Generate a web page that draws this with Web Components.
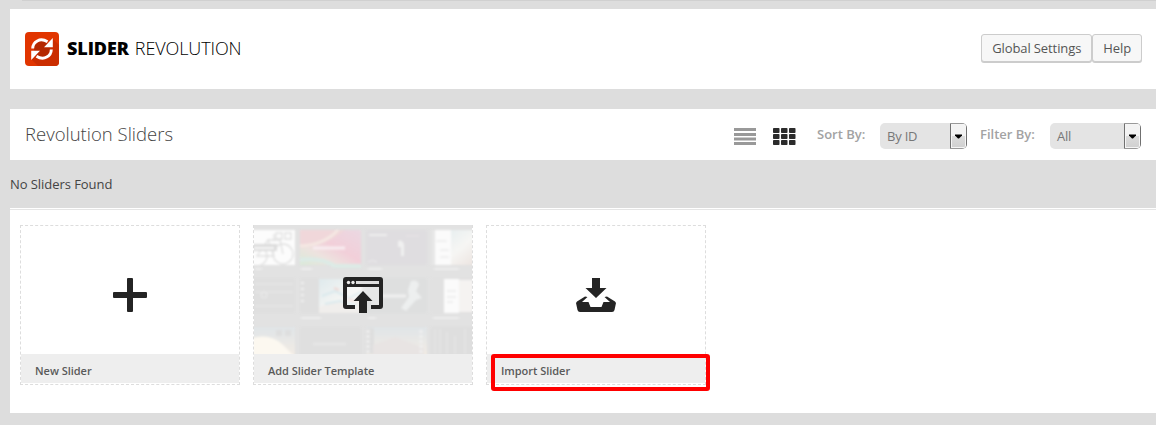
<!DOCTYPE html>
<html lang="en">
<head>
<meta charset="utf-8">
<title>Slider Revolution</title>
<style>
html,body{margin:0;height:425px;overflow:hidden;background:#ddd}
body{font-family:"Open Sans",sans-serif;color:#444}
</style>
</head>
<body>
<rev-app></rev-app>
<script>
const define = (name, html) => customElements.define(name, class extends HTMLElement {
  constructor() {
    super();
    const t = document.createElement('template');
    t.innerHTML = html;
    this.attachShadow({ mode: 'open' }).appendChild(t.content.cloneNode(true));
  }
});

define('rev-logo', `
<style>
:host{display:flex;align-items:flex-start;gap:8px;color:#000;font-size:18px;line-height:32px;white-space:nowrap;height:34px}
svg{display:block;flex:none}
.t{display:flex;gap:6px}
b{font-weight:800;letter-spacing:-.1px}
.l{font-weight:300;letter-spacing:-.1px}
</style>
<svg width="34" height="34" viewBox="0 0 34 34">
<rect width="34" height="34" rx="4" fill="#e13500"/>
<path d="M28 7 34 13V30a4 4 0 0 1-4 4H13L6.500 27.500Z" fill="#cb2d00"/>
<path d="M9 17a8 8 0 0 1 16 0 8 8 0 0 1-16 0Z" fill="#b42800"/>
<g fill="none" stroke="#fff" stroke-width="2.900"><path d="M7.700 16.500C7.700 10 15 5 22.500 9.800"/><path d="M26.300 17.500C26.300 24 19 29 11.500 24.200"/></g>
<path d="M27.800 6V15.200H19ZM6.200 28V18.800H15Z" fill="#fff"/>
</svg>
<div class="t"><b>SLIDER</b><span class="l">REVOLUTION</span></div>`);

define('rev-button', `
<style>
:host{display:block;box-sizing:border-box;height:28px;border:1px solid #ccc;border-radius:3px;background:#f7f7f7;box-shadow:0 1px 0 #ccc;color:#555;font-size:13px;letter-spacing:-.1px;line-height:26px;padding:0 10px;white-space:nowrap}
</style><slot></slot>`);

define('rev-select', `
<style>
:host{display:flex;justify-content:space-between;box-sizing:border-box;height:26px;background:#e4e4e4;border-radius:5px;color:#777;font-size:13px;letter-spacing:-.2px;line-height:26px;padding-left:7px;overflow:hidden}
.b{box-sizing:border-box;width:17px;height:26px;border:1px solid #707070;border-top-color:#999;border-bottom-color:#999;border-radius:0 3px 3px 0;background:linear-gradient(#f3f3f3 50%,#dcdcdc 50%,#d0d0d0);box-shadow:inset 0 0 0 1px #f5f5f5}
svg{display:block}
</style>
<span><slot></slot></span>
<span class="b"><svg width="15" height="24"><path d="M4 10.500h7v1l-3 3h-1l-3-3z" fill="#000"/></svg></span>`);

define('rev-view-icons', `
<style>:host{display:block;width:62px;height:18px}svg{display:block}</style>
<svg width="62" height="18">
<path d="M0 0h22v3H0zM0 5h22v3H0zM0 9.500h22v3H0zM0 14h22v3H0z" fill="#999"/>
<g fill="#2b2b2b"><rect x="39" width="6.500" height="5" rx=".8"/><rect x="47" width="6.500" height="5" rx=".8"/><rect x="55" width="6.500" height="5" rx=".8"/>
<rect x="39" y="6" width="6.500" height="5" rx=".8"/><rect x="47" y="6" width="6.500" height="5" rx=".8"/><rect x="55" y="6" width="6.500" height="5" rx=".8"/>
<rect x="39" y="12" width="6.500" height="5" rx=".8"/><rect x="47" y="12" width="6.500" height="5" rx=".8"/><rect x="55" y="12" width="6.500" height="5" rx=".8"/></g>
</svg>`);

define('rev-card', `
<style>
:host{display:grid;grid-template-rows:128px 29px;align-content:start;box-sizing:border-box;position:relative;width:220px;height:160px;border:1px dashed #ddd}
.pic{display:grid}
.pic ::slotted(*){grid-area:1/1}
.cap{background:#eee;font-size:11px;font-weight:600;letter-spacing:-.03px;line-height:34px;padding-left:14px;color:#5a5a5a}
</style>
<div class="pic"><slot name="picture"></slot></div>
<div class="cap"><slot></slot></div>
<slot name="marker"></slot>`);

define('template-preview', `
<style>:host{display:block;width:218px;height:129px;margin:-1px 0 0;overflow:hidden;background:#e4e4e4}svg{display:block}</style>
<svg width="218" height="130" viewBox="254 225 218 130">
<defs>
<linearGradient id="p" x1="0" y1="1" x2="1" y2="0"><stop offset="0" stop-color="#d9ead8"/><stop offset=".3" stop-color="#ede3df"/><stop offset=".55" stop-color="#f2cfd9"/><stop offset="1" stop-color="#ebd8e2"/></linearGradient>
<linearGradient id="s" x1="0" y1="0" x2="0" y2="1"><stop offset="0" stop-color="#e0e5e8"/><stop offset="1" stop-color="#f3ece4"/></linearGradient>
<linearGradient id="w" x1="0" y1="0" x2="1" y2="1"><stop offset="0" stop-color="#dfeaed"/><stop offset=".6" stop-color="#f6f6f4"/><stop offset="1" stop-color="#ece4e0"/></linearGradient>
<filter id="f" color-interpolation-filters="sRGB"><feGaussianBlur stdDeviation=".8"/></filter>
</defs>
<rect x="254" y="225" width="218" height="130" fill="#e2e2e2"/>
<g filter="url(#f)">
<rect x="252" y="230" width="43" height="35" fill="#fcfcfc"/>
<g fill="none" stroke="#e0e0e0" stroke-width="1.300"><circle cx="257" cy="256" r="10"/><circle cx="283" cy="254" r="10"/><path d="M257 256 268 240 274 256Z M268 240H280L283 254M274 234v7"/><path d="M276 233h6v6h-6zm9 0h6v6h-6z"/></g>
<rect x="252" y="244" width="25" height="7" fill="#dcdcdc"/><path d="M254 248h20" stroke="#f8f8f8" stroke-width="2"/>
<rect x="300" y="230" width="61" height="35" fill="url(#p)"/>
<path d="M300 230h45q-14 14-45 18z" fill="#f0d7da"/><path d="M300 246q24-1 38-16" fill="none" stroke="#f5e8e3" stroke-width="3"/>
<path d="M300 260q20-3 35 6h26" fill="none" stroke="#dcebe6" stroke-width="4"/><path d="M313 248h32" stroke="#f8edf1" stroke-width="3"/>
<rect x="366" y="230" width="61" height="35" fill="#dfdde0"/>
<path d="M369 235h18" stroke="#eee" stroke-width="2"/><path d="M398 241q4-2 6 3v12h-3v-9h-3z" fill="#f0f0f0"/><path d="M406 236h13" stroke="#e8e4e6"/><path d="M368 262q4-3 9 0" stroke="#eee" fill="none"/>
<rect x="431" y="230" width="43" height="35" fill="url(#w)"/><rect x="431" y="230" width="20" height="35" fill="#fbfbfb"/><path d="M431 230h4v35h-4z" fill="#e6e6e6"/><path d="M436 241h11M440 250h9M440 257h9" stroke="#e4e4e4" fill="none"/>
<rect x="252" y="278" width="43" height="35" fill="#dfdfdf"/><path d="M255 284h38m-38 8h38m-38 14h38" stroke="#e4e4e4" stroke-width="2"/><circle cx="264" cy="295" r="3" fill="none" stroke="#eee"/>
<rect x="300" y="278" width="19" height="35" fill="#dfdfdf"/><path d="M301 283h3m-3 6h3m-3 6h3m-3 6h3" stroke="#f0f0f0" stroke-width="2"/>
<rect x="319" y="279" width="43" height="34" fill="url(#w)"/><path d="M319 307q20-7 43-4v10h-43" fill="#f0eeec"/><path d="M322 296l13-5 14 7 12-6M325 304l15-3 16 4" stroke="#dae9ed" stroke-width="2" fill="none"/><path d="M334 288l5 2m9 9 6 2" stroke="#efd9d6" stroke-width="2"/>
<rect x="366" y="278" width="61" height="35" fill="#dedfdf"/><path d="M381 296h25" stroke="#f1f1f1" stroke-width="3"/><path d="M411 281q7-2 8 4l-3 6 6 7-6 2-10 11-5-3 8-11-1-7z" fill="#edefef"/>
<rect x="431" y="278" width="43" height="35" fill="#e1e1e1"/><rect x="444" y="279" width="15" height="34" fill="#fbfbfb"/><path d="M459 280h14v32h-14z" fill="#f5f3f1"/><path d="M447 291h9m-9 6h9m-9 5h6" stroke="#e2e2e2"/>
<rect x="252" y="327" width="43" height="30" fill="url(#s)"/><path d="M252 338q18-5 30 6l14 14h-44" fill="#fcf8f0"/><path d="M276 330h6v6h-6zm9 0h6v6h-6z" fill="#dedede"/>
<rect x="300" y="327" width="61" height="30" fill="#dfdfdf"/><path d="M313 344h33" stroke="#e6e6e6" stroke-width="3"/>
<rect x="366" y="327" width="61" height="30" fill="url(#s)"/><path d="M366 328h8v26h-8z" fill="#dedede"/><path d="m373 345 22-8 29 11v10h-51z" fill="#e8e4e3"/><path d="M368 330v23m53-23v23" stroke="#f0f0f0" stroke-width="3" stroke-dasharray="3 2"/>
<rect x="431" y="327" width="43" height="30" fill="#dedede"/><path d="M435 329v25m5-25v25m7-22v22m8-18v18m10-25v25" stroke="#e3e3e3" stroke-width="2"/>
<path d="M301 269h11m56 0h14m52 0h25M301 318h20m47 0h8m57 0h26M255 269h7" stroke="#f2f2f2" stroke-width="1.500"/>
</g>
</svg>`);

define('card-icon', `
<style>
:host{display:block;position:relative;z-index:1;align-self:center;justify-self:center;width:40px;height:40px;margin-top:10px}
::slotted(svg){display:block}
</style><slot></slot>`);

define('rev-marker', `
<style>:host{display:block;box-sizing:border-box;position:absolute;left:4px;top:128px;width:219px;height:37px;border:4px solid #f00;border-radius:3px}</style>`);

define('rev-app', `
<style>
:host{display:flex;flex-direction:column;box-sizing:border-box;height:425px;padding-left:10px;background:#ddd}
.top{height:1px;margin:0 0 8px 12px;background:#d0d0d0}
header{display:flex;justify-content:space-between;align-items:flex-start;height:80px;box-sizing:border-box;background:#fff;padding:23px 14px 0 15px}
.btns{display:flex;padding-top:2px}
.bar{display:flex;align-items:flex-start;height:51px;margin-top:20px;background:#fff;padding-left:15px}
h1{font-size:18.500px;font-weight:300;line-height:25px;margin:12px 0 0;width:709px}
rev-view-icons{margin-top:19px}
.lab{font-size:13px;font-weight:600;color:#a3a3a3;line-height:18px;margin-top:16px;white-space:nowrap}
.sort{width:63px;margin-left:21px}.filter{width:70px;margin-left:13px}
rev-select{margin-top:14px}
.s1{width:87px}.s2{width:91px}
p{font-size:13px;letter-spacing:-.06px;line-height:18px;margin:15px 0}
.panel{background:#fff;border-top:1px solid #fff}
.rule{height:1px;background:#e5e5e5}
main{display:flex;gap:13px;align-items:flex-start;box-sizing:border-box;height:203px;padding:15px 10px 0}
</style>
<div class="top"></div>
<header><rev-logo></rev-logo><div class="btns"><rev-button>Global Settings</rev-button><rev-button>Help</rev-button></div></header>
<div class="bar"><h1>Revolution Sliders</h1><rev-view-icons></rev-view-icons>
<span class="lab sort">Sort By:</span><rev-select class="s1">By ID</rev-select>
<span class="lab filter">Filter By:</span><rev-select class="s2">All</rev-select></div>
<p>No Sliders Found</p>
<div class="panel"><div class="rule"></div>
<main>
<rev-card><card-icon slot="picture"><svg width="40" height="40"><path d="M18 3h4q1 0 1 1v13h13q1 0 1 1v4q0 1-1 1H23v13q0 1-1 1h-4q-1 0-1-1V23H4q-1 0-1-1v-4q0-1 1-1h13V4q0-1 1-1z" fill="#242424"/></svg></card-icon>New Slider</rev-card>
<rev-card><template-preview slot="picture"></template-preview><card-icon slot="picture"><svg width="40" height="40"><path d="M3 2h34q3 0 3 3v26q0 3-3 3h-9v-4h8V12H4v18h8v4H3q-3 0-3-3V5q0-3 3-3z" fill="#242424"/><path d="M4 12h32v18h-8v-4h-4v-4H16v4h-4v4H4z" fill="#fff" opacity=".25"/><circle cx="5.500" cy="7.500" r="1.700" fill="#eee"/><circle cx="10" cy="7.500" r="1.700" fill="#eee"/><path d="M13 6h23v3H13z" fill="#ddd"/><path d="m20 16 9.500 10H24v12h-8V26h-5.500z" fill="#242424"/></svg></card-icon>Add Slider Template</rev-card>
<rev-card><card-icon slot="picture"><svg width="40" height="40"><path d="M16 3h8v10h6.500L20 23 9.500 13H16zM9 21.500 11.500 22 6 27h6.500l2 5h11l2-5H34l-5.500-5 2.500-.5 8 5 1 1.500-1.500 7q-.4 2-2.500 2H4q-2 0-2.500-2L0 28l1-1.500z" fill="#242424"/></svg></card-icon>Import Slider<rev-marker slot="marker"></rev-marker></rev-card>
</main></div>`);
</script>
</body>
</html>
